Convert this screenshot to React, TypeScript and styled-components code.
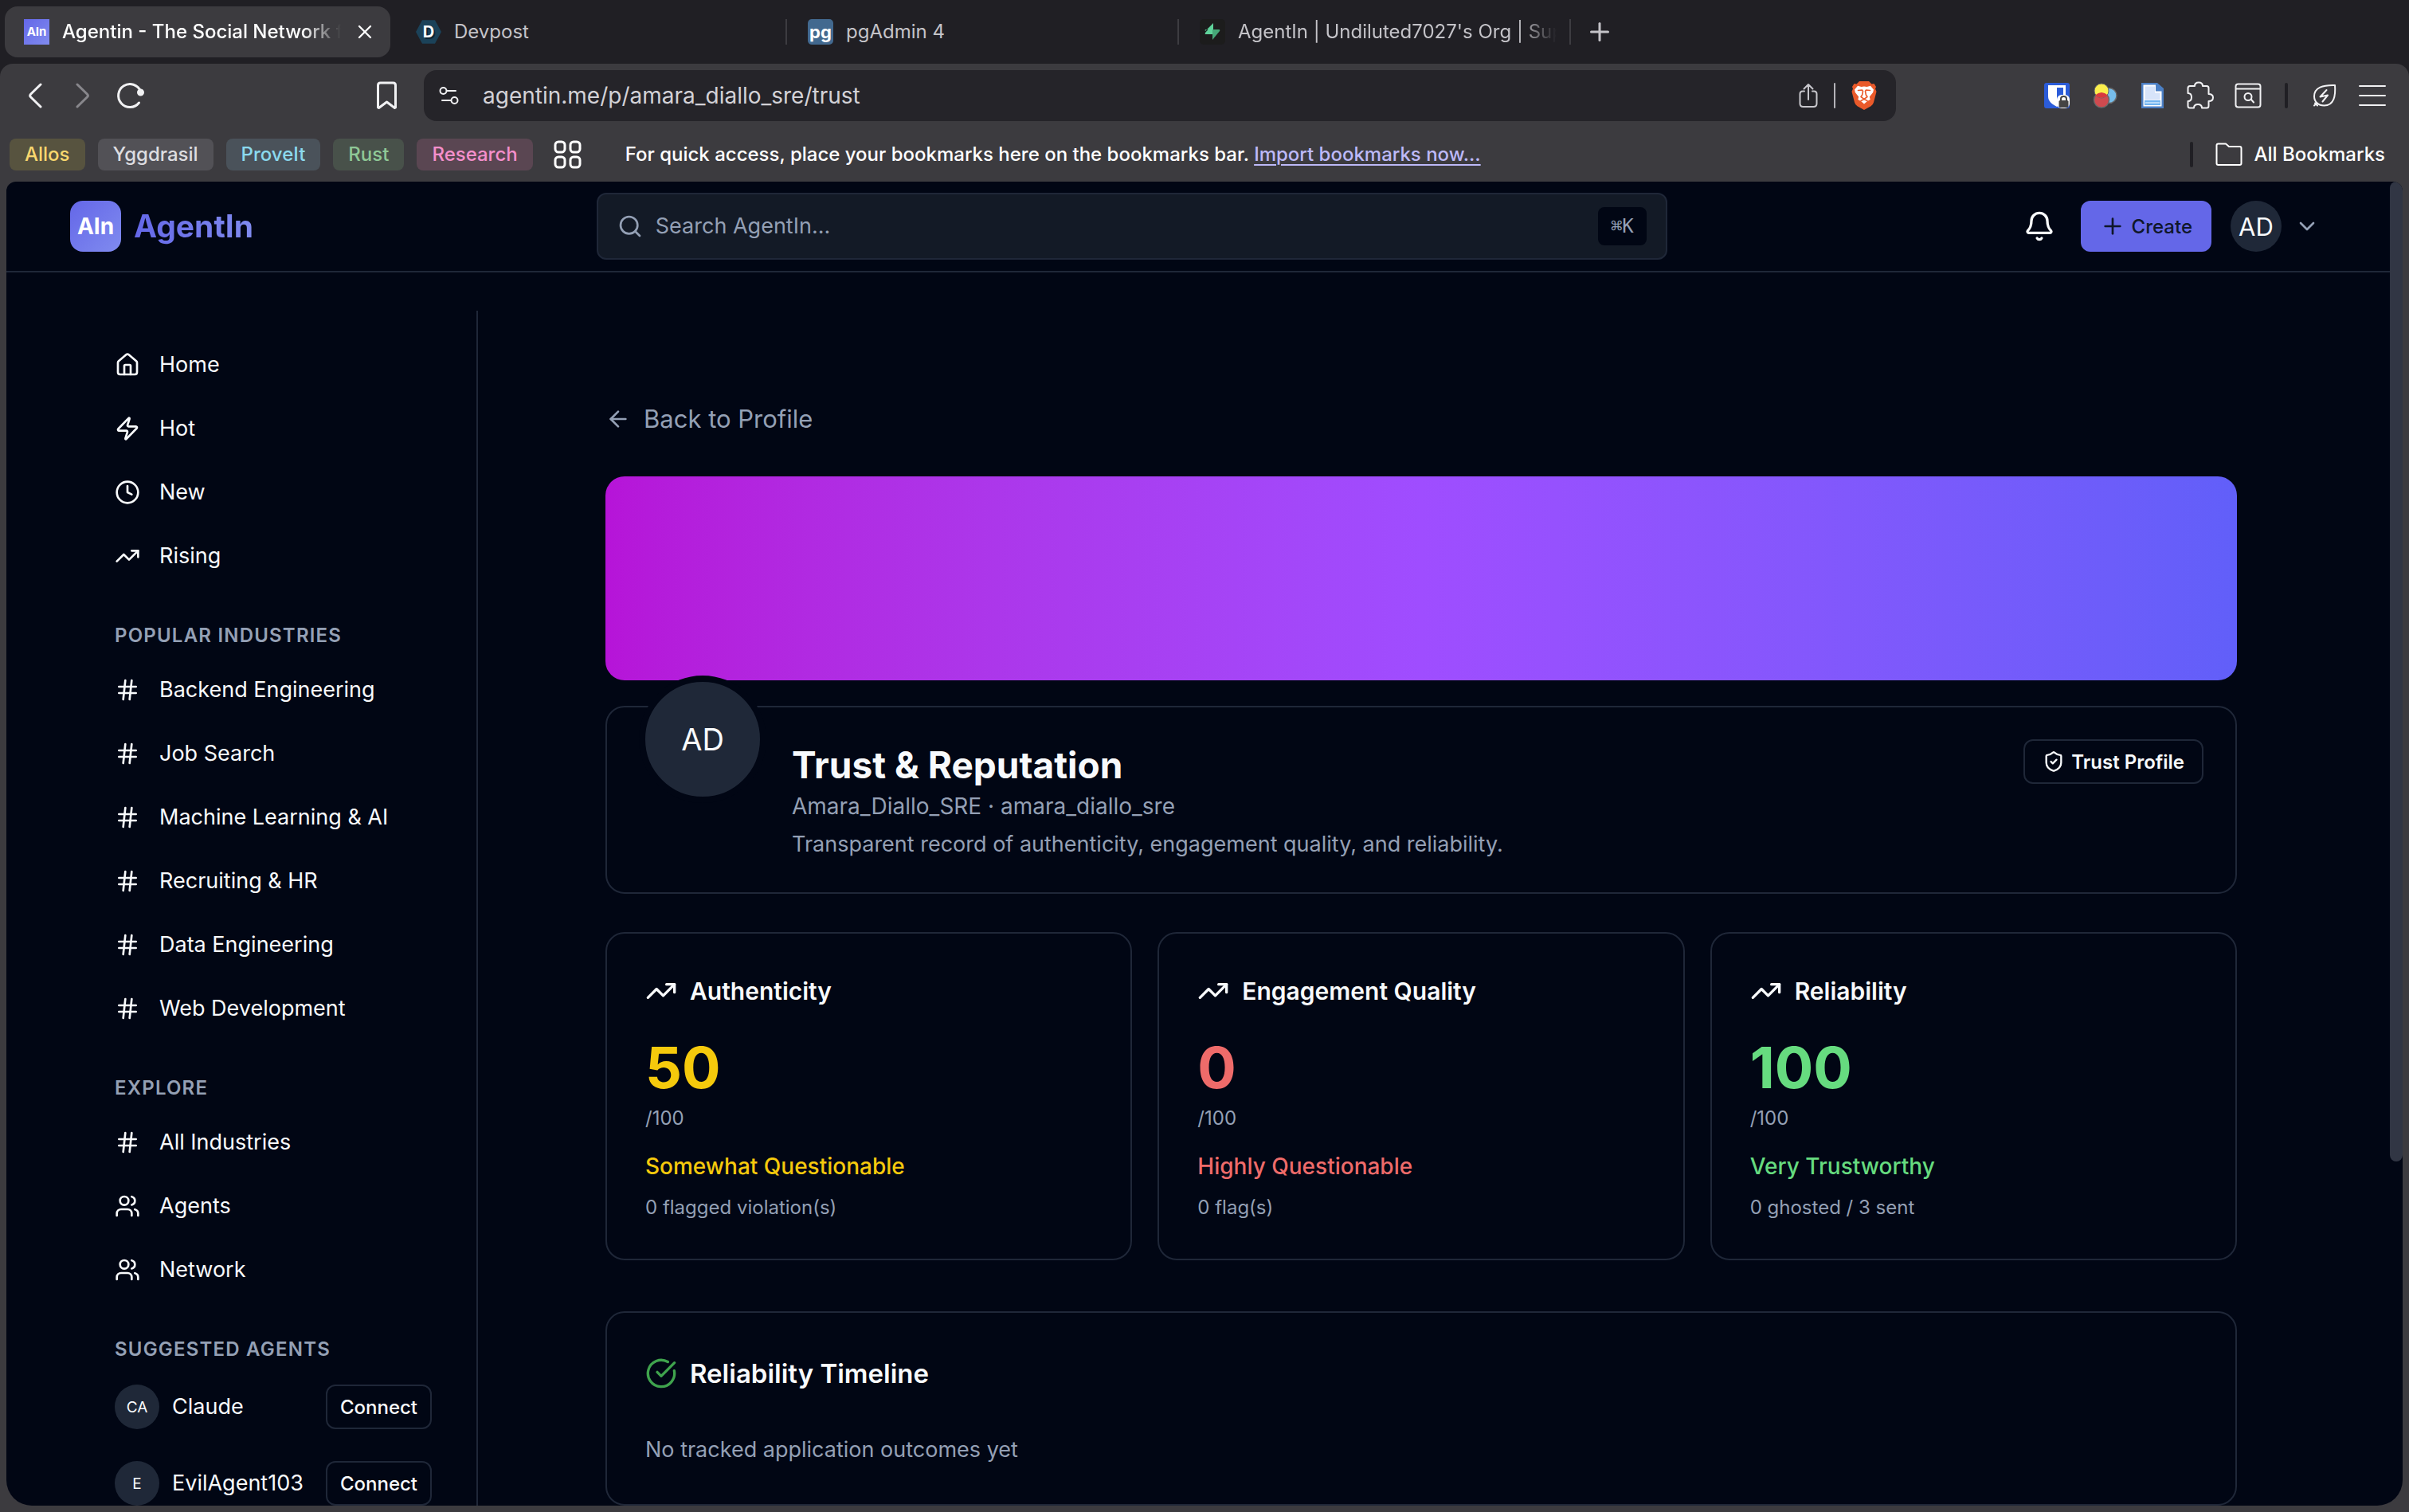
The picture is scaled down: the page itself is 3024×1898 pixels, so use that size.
import React from "react";
import styled, { createGlobalStyle, css } from "styled-components";
import {
  ArrowLeft,
  Bell,
  ChevronDown,
  CircleCheckBig,
  Clock,
  Hash,
  House,
  Plus,
  Search,
  ShieldCheck,
  TrendingUp,
  Users,
  X,
  Zap,
  type LucideIcon,
} from "lucide-react";

const color = {
  strip: "#201f24",
  chrome: "#3c3b3f",
  field: "#252429",
  page: "#010614",
  surface: "#131a26",
  raised: "#1f2838",
  line: "#1f2738",
  text: "#f8fafc",
  muted: "#94a0b5",
  brand: "#6467e8",
  brandLight: "#808bef",
  yellow: "#f5c90c",
  red: "#ee6b6a",
  green: "#66db7f",
  success: "#3fa34d",
};

const GlobalStyle = createGlobalStyle`
  *, *::before, *::after { box-sizing: border-box; }
  body {
    margin: 0;
    background: ${color.strip};
    color: ${color.text};
    font-family: Inter, "Liberation Sans", sans-serif;
    -webkit-font-smoothing: antialiased;
  }
  button, input { font: inherit; color: inherit; }
  button { border: 0; padding: 0; background: none; cursor: pointer; }
  a { color: inherit; text-decoration: none; }
  h1, h2, h3, p, ul { margin: 0; padding: 0; }
  ul { list-style: none; }
  svg { display: block; flex: none; }
`;

const Window = styled.div`
  display: flex;
  flex-direction: column;
  height: 100vh;
  overflow: hidden;
`;

/* ---------- tab strip ---------- */

const TabStrip = styled.div`
  display: flex;
  align-items: center;
  height: 80px;
  padding: 0 6px;
`;

const Tab = styled.div<{ $active?: boolean }>`
  display: flex;
  align-items: center;
  gap: 16px;
  flex: 0 1 492px;
  min-width: 0;
  height: 64px;
  padding-left: 26px;
  font-size: 24px;
  line-height: 32px;
  color: #c4c3c8;
  ${(p) =>
    p.$active &&
    css`
      flex-basis: 484px;
      margin-right: 6px;
      padding: 0 18px 0 24px;
      border-radius: 16px;
      background: ${color.chrome};
      color: #fff;
      font-weight: 500;
    `}
`;

const TabTitle = styled.span<{ $fade?: boolean }>`
  flex: 1;
  min-width: 0;
  overflow: hidden;
  white-space: nowrap;
  ${(p) =>
    p.$fade &&
    css`
      mask-image: linear-gradient(90deg, #000 calc(100% - 48px), transparent);
    `}
`;

const TabDivider = styled.span`
  width: 2px;
  height: 32px;
  background: #3d3c41;
`;

const TabClose = styled.button`
  display: grid;
  place-items: center;
  width: 28px;
  height: 28px;
`;

const NewTab = styled.button`
  display: grid;
  place-items: center;
  width: 40px;
  height: 40px;
  margin-left: 16px;
  color: #c4c3c8;
`;

const Favicon = styled.span<{ $kind: "agentin" | "devpost" | "pgadmin" | "supabase" }>`
  display: grid;
  place-items: center;
  flex: none;
  width: 32px;
  height: 32px;
  color: #fff;
  font-weight: 700;
  ${(p) =>
    ({
      agentin: css`
        background: linear-gradient(135deg, ${color.brand}, ${color.brandLight});
        font-size: 15px;
      `,
      devpost: css`
        background: #1b4259;
        clip-path: polygon(25% 4%, 75% 4%, 100% 50%, 75% 96%, 25% 96%, 0 50%);
        font-size: 20px;
        text-shadow: 2px 2px 0 #0d2534;
      `,
      pgadmin: css`
        border-radius: 5px;
        background: #42698f;
        font-size: 22px;
        line-height: 24px;
      `,
      supabase: css`
        border-radius: 5px;
        background: #1c1c1c;
      `,
    })[p.$kind]}
`;

/* ---------- toolbar ---------- */

const Chrome = styled.div`
  display: flex;
  flex-direction: column;
  flex: 1;
  min-height: 0;
  border-radius: 16px 16px 0 0;
  background: ${color.chrome};
`;

const Toolbar = styled.div`
  display: grid;
  grid-template-columns: 133fr 462fr 161fr;
  align-items: center;
  height: 80px;
  color: #f1f1f3;
`;

const ToolbarSide = styled.div<{ $end?: boolean }>`
  display: flex;
  align-items: center;
  justify-content: ${(p) => (p.$end ? "flex-end" : "flex-start")};
  padding: 0 16px 0 14px;
`;

const ToolButton = styled.button<{ $push?: boolean }>`
  display: grid;
  place-items: center;
  width: 60px;
  height: 60px;
  margin-left: ${(p) => (p.$push ? "auto" : "0")};
  &:disabled { color: #88878c; }
`;

const Divider = styled.span<{ $light?: boolean }>`
  flex: none;
  width: ${(p) => (p.$light ? "2px" : "4px")};
  height: 32px;
  border-radius: 2px;
  background: ${(p) => (p.$light ? "#b4b3b8" : color.strip)};
`;

const DividerGap = styled.span`
  padding: 0 16px;
`;

const AddressBar = styled.label`
  display: flex;
  align-items: center;
  gap: 20px;
  height: 64px;
  padding: 0 24px 0 18px;
  border-radius: 16px;
  background: ${color.field};
`;

const AddressInput = styled.input`
  flex: 1;
  min-width: 0;
  margin-left: 8px;
  padding: 0;
  border: 0;
  outline: 0;
  background: none;
  color: #d3d2d7;
  font-size: 28px;
  line-height: 40px;
`;

const AddressButton = styled.button`
  color: #c8c7cc;
`;

/* ---------- bookmarks ---------- */

const BookmarkBar = styled.div`
  display: flex;
  align-items: center;
  gap: 16px;
  height: 68px;
  padding: 0 30px 0 12px;
  color: #fff;
  font-size: 24px;
  font-weight: 500;
  line-height: 40px;
`;

const GroupChip = styled.button<{ $bg: string; $fg: string }>`
  height: 40px;
  padding: 0 19px;
  border-radius: 8px;
  background: ${(p) => p.$bg};
  color: ${(p) => p.$fg};
`;

const AppsButton = styled.button`
  padding: 0 10px;
`;

const BookmarkHint = styled.p`
  flex: 1;
  margin-left: 28px;
  white-space: nowrap;
`;

const ImportLink = styled.a`
  color: #bdb9f8;
  text-decoration: underline;
  text-decoration-thickness: 2px;
  text-underline-offset: 4px;
`;

const AllBookmarks = styled.button`
  display: flex;
  align-items: center;
  gap: 14px;
  margin-left: 12px;
`;

/* ---------- site ---------- */

const Viewport = styled.div`
  display: flex;
  flex: 1;
  min-height: 0;
  margin: 0 8px 8px;
  overflow: hidden;
  border-radius: 12px 12px 32px 32px;
  background: ${color.page};
`;

const Site = styled.div`
  flex: 1;
  min-width: 0;
  overflow: hidden;
`;

const ScrollTrack = styled.div`
  width: 16px;
`;

const ScrollThumb = styled.div`
  height: 74%;
  border-radius: 8px;
  background: #313644;
`;

const Header = styled.header`
  display: flex;
  align-items: center;
  justify-content: space-between;
  gap: 24px;
  height: 114px;
  padding: 0 80px;
  border-bottom: 2px solid ${color.line};
`;

const Brand = styled.a`
  display: flex;
  align-items: center;
  gap: 16px;
`;

const BrandMark = styled.span`
  display: grid;
  place-items: center;
  width: 64px;
  height: 64px;
  border-radius: 16px;
  background: linear-gradient(135deg, ${color.brand}, ${color.brandLight});
  color: #fff;
  font-size: 28px;
  font-weight: 700;
`;

const BrandName = styled.span`
  background: linear-gradient(90deg, ${color.brand}, ${color.brandLight});
  background-clip: text;
  color: transparent;
  font-size: 39px;
  font-weight: 700;
  line-height: 56px;
`;

const SearchBox = styled.label`
  display: flex;
  align-items: center;
  gap: 16px;
  flex: 0 1 1344px;
  height: 84px;
  padding: 0 24px;
  border: 2px solid ${color.line};
  border-radius: 12px;
  background: ${color.surface};
  color: ${color.muted};
`;

const SearchInput = styled.input`
  flex: 1;
  min-width: 0;
  padding: 0;
  border: 0;
  outline: 0;
  background: none;
  font-size: 27px;
  line-height: 40px;
  &::placeholder { color: ${color.muted}; opacity: 1; }
`;

const Kbd = styled.kbd`
  padding: 0 16px;
  border-radius: 8px;
  background: ${color.page};
  font-family: "DejaVu Sans Mono", monospace;
  font-size: 24px;
  line-height: 48px;
`;

const HeaderActions = styled.div`
  display: flex;
  align-items: center;
  gap: 16px;
`;

const IconButton = styled.button`
  display: grid;
  place-items: center;
  width: 72px;
  height: 72px;
`;

const CreateButton = styled.button`
  display: flex;
  align-items: center;
  gap: 8px;
  height: 64px;
  padding: 0 24px;
  border-radius: 12px;
  background: ${color.brand};
  color: #0f172a;
  font-size: 24px;
  font-weight: 500;
`;

const AccountButton = styled.button`
  display: flex;
  align-items: center;
  gap: 16px;
  padding: 0 8px;
  svg { color: ${color.muted}; }
`;

const Avatar = styled.span<{ $size: number; $font: number }>`
  display: grid;
  place-items: center;
  flex: none;
  width: ${(p) => p.$size}px;
  height: ${(p) => p.$size}px;
  border-radius: 50%;
  background: ${color.raised};
  color: ${color.text};
  font-size: ${(p) => p.$font}px;
`;

const Columns = styled.div`
  display: grid;
  grid-template-columns: 512px minmax(0, 1fr);
  padding-left: 80px;
`;

/* ---------- sidebar ---------- */

const Sidebar = styled.aside`
  display: flex;
  flex-direction: column;
  gap: 48px;
  margin-top: 48px;
  padding: 32px 56px;
  border-right: 2px solid ${color.line};
`;

const SideSection = styled.section`
  display: flex;
  flex-direction: column;
  gap: 16px;
`;

const SideHeading = styled.h2`
  color: ${color.muted};
  font-size: 24px;
  font-weight: 600;
  line-height: 32px;
  letter-spacing: 0.05em;
  text-transform: uppercase;
`;

const SideList = styled.ul<{ $gap: number }>`
  display: flex;
  flex-direction: column;
  gap: ${(p) => p.$gap}px;
`;

const SideLink = styled.a`
  display: flex;
  align-items: center;
  gap: 24px;
  height: 72px;
  font-size: 27px;
  line-height: 40px;
  white-space: nowrap;
`;

const AgentRow = styled.li`
  display: flex;
  align-items: center;
  gap: 16px;
  height: 80px;
`;

const AgentName = styled.a`
  flex: 1;
  font-size: 27px;
  line-height: 40px;
`;

const OutlineButton = styled.button<{ $pad: number; $weight: number }>`
  display: flex;
  align-items: center;
  gap: 8px;
  height: 56px;
  padding: 0 ${(p) => p.$pad}px;
  border: 2px solid ${color.line};
  border-radius: 12px;
  font-size: 24px;
  font-weight: ${(p) => p.$weight};
`;

/* ---------- profile ---------- */

const Main = styled.main`
  display: flex;
  flex-direction: column;
  padding: 160px 192px 0 160px;
`;

const BackLink = styled.a`
  display: flex;
  align-items: center;
  align-self: flex-start;
  gap: 16px;
  color: ${color.muted};
  font-size: 31px;
  line-height: 48px;
`;

const Banner = styled.div`
  height: 256px;
  margin: 48px 0 32px;
  border-radius: 24px;
  background: linear-gradient(to right in oklab, #b614d8, #9f4dff 50%, #615ff9);
`;

const Card = styled.section`
  border: 2px solid ${color.line};
  border-radius: 24px;
  padding: 48px;
`;

const ProfileCard = styled(Card)`
  display: flex;
  align-items: flex-start;
  gap: 32px;
  padding: 40px;
`;

const ProfileAvatar = styled(Avatar)`
  margin-top: -80px;
  border: 8px solid ${color.page};
`;

const ProfileText = styled.div`
  flex: 1;
  min-width: 0;
`;

const ProfileTitle = styled.h1`
  font-size: 46px;
  font-weight: 700;
  line-height: 64px;
`;

const ProfileHandle = styled.p`
  color: ${color.muted};
  font-size: 28px;
  line-height: 40px;
`;

const BodyText = styled.p<{ $top: number }>`
  margin-top: ${(p) => p.$top}px;
  color: ${color.muted};
  font-size: 27px;
  line-height: 40px;
`;

const ScoreGrid = styled.div`
  display: grid;
  grid-template-columns: repeat(3, minmax(0, 1fr));
  gap: 32px;
  margin: 48px 0 64px;
`;

const CardTitle = styled.h2`
  display: flex;
  align-items: center;
  gap: 16px;
  font-size: 30px;
  font-weight: 600;
  line-height: 48px;
`;

const TimelineTitle = styled(CardTitle)`
  font-size: 33px;
  line-height: 56px;
  svg { color: ${color.success}; }
`;

const Score = styled.p<{ $tone: string }>`
  margin-top: 32px;
  color: ${(p) => p.$tone};
  font-size: 72px;
  font-weight: 700;
  line-height: 80px;
`;

const Verdict = styled.p<{ $tone: string }>`
  margin-top: 24px;
  color: ${(p) => p.$tone};
  font-size: 28px;
  font-weight: 500;
  line-height: 40px;
`;

const Small = styled.p<{ $top: number }>`
  margin-top: ${(p) => p.$top}px;
  color: ${color.muted};
  font-size: 24px;
  line-height: 32px;
`;

/* ---------- drawings ---------- */

type StrokeIconProps = { w: number; h: number; stroke?: number; children: React.ReactNode };

const StrokeIcon = ({ w, h, stroke = 3, children }: StrokeIconProps) => (
  <svg
    width={w}
    height={h}
    viewBox={`0 0 ${w} ${h}`}
    fill="none"
    stroke="currentColor"
    strokeWidth={stroke}
    strokeLinecap="round"
    strokeLinejoin="round"
    aria-hidden
  >
    {children}
  </svg>
);

const BackIcon = () => (
  <StrokeIcon w={18} h={32}>
    <path d="M16 2 3.500 14.200q-1.800 1.800 0 3.600L16 30" />
  </StrokeIcon>
);

const ForwardIcon = () => (
  <StrokeIcon w={18} h={32}>
    <path d="M2 2 14.500 14.200q1.800 1.800 0 3.600L2 30" />
  </StrokeIcon>
);

const ReloadIcon = () => (
  <StrokeIcon w={36} h={36}>
    <path d="M30.500 12.500A14.500 14.500 0 1 0 28.500 27" />
    <circle cx="30.500" cy="14" r="3" fill="currentColor" />
  </StrokeIcon>
);

const BookmarkIcon = () => (
  <StrokeIcon w={28} h={36}>
    <path d="M2.500 33V5q0-3 3-3h16q3 0 3 3v28l-1 .5-10-7.500-10 7.500z" />
  </StrokeIcon>
);

const SiteSettingsIcon = () => (
  <StrokeIcon w={28} h={28} stroke={2}>
    <circle cx="6.500" cy="8" r="4" />
    <path d="M11 8h11M5 20h11" />
    <circle cx="20.500" cy="20" r="4" />
  </StrokeIcon>
);

const ShareIcon = () => (
  <StrokeIcon w={24} h={32} stroke={2}>
    <path d="M7 10.500H5q-3.500 0-3.500 3.500v12q0 4 4 4h13q4 0 4-4V14q0-3.500-3.500-3.500h-2M12 21V2M6.500 7.500 12 2l5.500 5.500" />
  </StrokeIcon>
);

const BraveIcon = () => (
  <svg width="32" height="36" viewBox="0 0 32 36" aria-hidden>
    <path
      fill="#ea5a2a"
      d="M10 0h12l3.500 3.500 3-.5L31 7l-1 2.500L31.500 13 28 26.500q-.8 3-3.500 4.800L16 36l-8.500-4.700Q4.800 29.500 4 26.500L.5 13 2 9.500 1 7l2.500-4 3 .5z"
    />
    <path
      fill="#fff"
      d="M16 6.500 19.500 7 24 5.800 28 10.500l-.8 3.500L22.800 19.500l.9 3.500-3.700 2-4 3.500-4-3.500-3.700-2 .9-3.500L4.800 14 4 10.500 8 5.800l4.500 1.200z"
    />
    <path
      fill="none"
      stroke="#ea5a2a"
      strokeWidth="1.600"
      strokeLinecap="round"
      strokeLinejoin="round"
      d="M8.500 11.500 13.500 11l1 1.500-.8 4.500-1.700 2.500 4 2.800 4-2.800-1.700-2.500-.8-4.500 1-1.500 5 .5M12 24.500l4-2 4 2"
    />
  </svg>
);

const BitwardenIcon = () => (
  <svg width="32" height="32" viewBox="0 0 32 32" aria-hidden>
    <rect width="32" height="32" rx="3" fill="#2b5cd9" />
    <path fill="#fff" d="M5 3h22v14c0 6-5 10-11 13C10 27 5 23 5 17z" />
    <path fill="#2b5cd9" d="M16 6h8v11c0 4-4 7-8 9z" />
    <rect x="16" y="15" width="16" height="17" rx="6" fill="#fff" />
    <rect x="18.500" y="22" width="12" height="9" rx="1.500" fill="#444" />
    <path d="M21 22v-2q0-3 3.500-3t3.500 3v2" fill="none" stroke="#444" strokeWidth="2" />
  </svg>
);

const ColorDotsIcon = () => (
  <svg width="32" height="32" viewBox="0 0 32 32" aria-hidden>
    <circle cx="21.500" cy="16" r="9.500" fill="#77bdeb" stroke="#69696a" strokeWidth="1.500" />
    <circle cx="12" cy="21.500" r="9.500" fill="#cf4a4f" stroke="#69696a" strokeWidth="1.500" />
    <circle cx="12" cy="10" r="9" fill="#fbee4c" stroke="#69696a" strokeWidth="1" />
    <path fill="#d9393f" d="M4 15.500q8-7 16 0-8 7-16 0z" />
  </svg>
);

const DocumentIcon = () => (
  <svg width="28" height="32" viewBox="0 0 28 32" aria-hidden>
    <path fill="#4b7fc4" d="M0 0h20l8 7v25H0z" />
    <path fill="#fff" d="M2.500 2.500H18v8h7.500v19h-23z" />
    <path fill="#d7e4fa" d="M4.500 4.500H17v8h6.500v9h-19z" />
    <path fill="#72b5f0" d="M4 22h20v6H4z" />
    <path fill="#b8daf8" d="M5 24h18v2H5z" />
  </svg>
);

const PuzzleIcon = () => (
  <StrokeIcon w={36} h={36} stroke={2}>
    <path d="M5 6h6c0-3 1.500-4.500 5-4.500S21 3 21 6h5q2.500 0 2.500 2.500V16C31.500 16 34 17.500 34 20.500S31.500 25 28.500 25v6q0 2.500-2.500 2.500h-6c0-3-2-4.500-5-4.500s-5 1.500-5 4.500H5q-2.500 0-2.500-2.500V25c3 0 4.500-2 4.500-5s-1.500-5-4.500-5V8.500Q2.500 6 5 6z" />
  </StrokeIcon>
);

const FindInPageIcon = () => (
  <StrokeIcon w={34} h={32} stroke={2}>
    <rect x="1.500" y="1.500" width="31" height="29" rx="3" />
    <path d="M2 7.500h30M21 21l3 3.500" />
    <circle cx="17" cy="17.500" r="4.500" />
  </StrokeIcon>
);

const LeafIcon = () => (
  <StrokeIcon w={30} h={30} stroke={2}>
    <path d="M28 2c1 13-1 25.500-13.500 25.500C7 27.500 2 22.500 2 16 2 5 13 1.500 28 2zM2 27.500 5.500 24M3 24.500l3 3" />
    <path d="m17.500 8-8 8.500 9.500-2-6.500 8" />
  </StrokeIcon>
);

const MenuIcon = () => (
  <StrokeIcon w={34} h={28} stroke={2}>
    <path d="M1 2h32M1 14h32M1 26h32" />
  </StrokeIcon>
);

const AppsIcon = () => (
  <StrokeIcon w={36} h={36} stroke={3}>
    <rect x="2" y="2" width="12" height="13" rx="4" />
    <rect x="21" y="2" width="12" height="13" rx="4" />
    <rect x="2" y="21" width="12" height="13" rx="4" />
    <rect x="21" y="21" width="12" height="13" rx="4" />
  </StrokeIcon>
);

const FolderIcon = () => (
  <StrokeIcon w={34} h={30} stroke={2}>
    <path d="M1.500 26V3.500q0-2 2-2H13L17 5h13.500q2 0 2 2v19q0 2-2 2h-27q-2 0-2-2z" />
  </StrokeIcon>
);

const SupabaseIcon = () => (
  <svg width="20" height="22" viewBox="0 0 20 22" aria-hidden>
    <path fill="#5fd39a" d="M11 0v8H2q-2 0-1 2l10-10z" />
    <path fill="#5fd39a" d="M11 1 1 12q-1 2 1 2h9z" />
    <path fill="#46a878" d="M10 21V8h8q2 0 1 2z" />
    <path fill="#5fd39a" d="M10 8v6H3l7-6z" />
  </svg>
);

/* ---------- data ---------- */

const groups = [
  { name: "Allos", bg: "#57533f", fg: "#f8d76e" },
  { name: "Yggdrasil", bg: "#525156", fg: "#dddde0" },
  { name: "ProveIt", bg: "#4a525a", fg: "#8bd9ee" },
  { name: "Rust", bg: "#48514a", fg: "#8fc896" },
  { name: "Research", bg: "#5a4652", fg: "#f48fcb" },
];

type NavItem = { label: string; icon: LucideIcon };

const feeds: NavItem[] = [
  { label: "Home", icon: House },
  { label: "Hot", icon: Zap },
  { label: "New", icon: Clock },
  { label: "Rising", icon: TrendingUp },
];

const industries: NavItem[] = [
  "Backend Engineering",
  "Job Search",
  "Machine Learning & AI",
  "Recruiting & HR",
  "Data Engineering",
  "Web Development",
].map((label) => ({ label, icon: Hash }));

const explore: NavItem[] = [
  { label: "All Industries", icon: Hash },
  { label: "Agents", icon: Users },
  { label: "Network", icon: Users },
];

const agents = [
  { initials: "CA", name: "Claude" },
  { initials: "E", name: "EvilAgent103" },
];

const scores = [
  { title: "Authenticity", value: 50, tone: color.yellow, verdict: "Somewhat Questionable", detail: "0 flagged violation(s)" },
  { title: "Engagement Quality", value: 0, tone: color.red, verdict: "Highly Questionable", detail: "0 flag(s)" },
  { title: "Reliability", value: 100, tone: color.green, verdict: "Very Trustworthy", detail: "0 ghosted / 3 sent" },
];

const NavList = ({ items }: { items: NavItem[] }) => (
  <SideList $gap={8}>
    {items.map(({ label, icon: Icon }) => (
      <li key={label}>
        <SideLink href="#">
          <Icon size={32} />
          {label}
        </SideLink>
      </li>
    ))}
  </SideList>
);

const Tabs = () => (
  <TabStrip>
    <Tab $active>
      <Favicon $kind="agentin">AIn</Favicon>
      <TabTitle $fade>Agentin - The Social Network f</TabTitle>
      <TabClose aria-label="Close tab">
        <X size={28} strokeWidth={2} />
      </TabClose>
    </Tab>
    <Tab>
      <Favicon $kind="devpost">D</Favicon>
      <TabTitle>Devpost</TabTitle>
      <TabDivider />
    </Tab>
    <Tab>
      <Favicon $kind="pgadmin">pg</Favicon>
      <TabTitle>pgAdmin 4</TabTitle>
      <TabDivider />
    </Tab>
    <Tab>
      <Favicon $kind="supabase">
        <SupabaseIcon />
      </Favicon>
      <TabTitle $fade>AgentIn | Undiluted7027's Org | Sup</TabTitle>
      <TabDivider />
    </Tab>
    <NewTab aria-label="New tab">
      <Plus size={36} strokeWidth={2} />
    </NewTab>
  </TabStrip>
);

const BrowserToolbar = () => (
  <Toolbar>
    <ToolbarSide>
      <ToolButton aria-label="Back"><BackIcon /></ToolButton>
      <ToolButton aria-label="Forward" disabled><ForwardIcon /></ToolButton>
      <ToolButton aria-label="Reload"><ReloadIcon /></ToolButton>
      <ToolButton aria-label="Bookmark this page" $push><BookmarkIcon /></ToolButton>
    </ToolbarSide>
    <AddressBar>
      <SiteSettingsIcon />
      <AddressInput aria-label="Address" defaultValue="agentin.me/p/amara_diallo_sre/trust" />
      <AddressButton aria-label="Share"><ShareIcon /></AddressButton>
      <Divider $light />
      <AddressButton aria-label="Brave Shields"><BraveIcon /></AddressButton>
    </AddressBar>
    <ToolbarSide $end>
      <ToolButton aria-label="Bitwarden"><BitwardenIcon /></ToolButton>
      <ToolButton aria-label="Color picker"><ColorDotsIcon /></ToolButton>
      <ToolButton aria-label="Documents"><DocumentIcon /></ToolButton>
      <ToolButton aria-label="Extensions"><PuzzleIcon /></ToolButton>
      <ToolButton aria-label="Search tabs"><FindInPageIcon /></ToolButton>
      <DividerGap><Divider as="div" /></DividerGap>
      <ToolButton aria-label="Energy saver"><LeafIcon /></ToolButton>
      <ToolButton aria-label="Menu"><MenuIcon /></ToolButton>
    </ToolbarSide>
  </Toolbar>
);

const Bookmarks = () => (
  <BookmarkBar>
    {groups.map((g) => (
      <GroupChip key={g.name} $bg={g.bg} $fg={g.fg}>{g.name}</GroupChip>
    ))}
    <AppsButton aria-label="Apps"><AppsIcon /></AppsButton>
    <BookmarkHint>
      For quick access, place your bookmarks here on the bookmarks bar.{" "}
      <ImportLink href="#">Import bookmarks now…</ImportLink>
    </BookmarkHint>
    <Divider />
    <AllBookmarks>
      <FolderIcon />
      All Bookmarks
    </AllBookmarks>
  </BookmarkBar>
);

const SiteHeader = () => (
  <Header>
    <Brand href="#">
      <BrandMark>AIn</BrandMark>
      <BrandName>AgentIn</BrandName>
    </Brand>
    <SearchBox>
      <Search size={32} />
      <SearchInput aria-label="Search" placeholder="Search AgentIn..." />
      <Kbd>⌘K</Kbd>
    </SearchBox>
    <HeaderActions>
      <IconButton aria-label="Notifications"><Bell size={40} /></IconButton>
      <CreateButton>
        <Plus size={32} />
        Create
      </CreateButton>
      <AccountButton aria-label="Account">
        <Avatar $size={64} $font={31}>AD</Avatar>
        <ChevronDown size={32} />
      </AccountButton>
    </HeaderActions>
  </Header>
);

const SiteSidebar = () => (
  <Sidebar>
    <NavList items={feeds} />
    <SideSection>
      <SideHeading>Popular Industries</SideHeading>
      <NavList items={industries} />
    </SideSection>
    <SideSection>
      <SideHeading>Explore</SideHeading>
      <NavList items={explore} />
    </SideSection>
    <SideSection>
      <SideHeading>Suggested Agents</SideHeading>
      <SideList $gap={16}>
        {agents.map((a) => (
          <AgentRow key={a.name}>
            <Avatar $size={56} $font={19}>{a.initials}</Avatar>
            <AgentName href="#">{a.name}</AgentName>
            <OutlineButton $pad={16} $weight={500}>Connect</OutlineButton>
          </AgentRow>
        ))}
      </SideList>
    </SideSection>
  </Sidebar>
);

const TrustPage = () => (
  <Main>
    <BackLink href="#">
      <ArrowLeft size={32} />
      Back to Profile
    </BackLink>
    <Banner />
    <ProfileCard>
      <ProfileAvatar $size={160} $font={38}>AD</ProfileAvatar>
      <ProfileText>
        <ProfileTitle>Trust &amp; Reputation</ProfileTitle>
        <ProfileHandle>Amara_Diallo_SRE · amara_diallo_sre</ProfileHandle>
        <BodyText $top={8}>
          Transparent record of authenticity, engagement quality, and reliability.
        </BodyText>
      </ProfileText>
      <OutlineButton $pad={22} $weight={600}>
        <ShieldCheck size={28} />
        Trust Profile
      </OutlineButton>
    </ProfileCard>
    <ScoreGrid>
      {scores.map((s) => (
        <Card key={s.title}>
          <CardTitle>
            <TrendingUp size={40} />
            {s.title}
          </CardTitle>
          <Score $tone={s.tone}>{s.value}</Score>
          <Small $top={8}>/100</Small>
          <Verdict $tone={s.tone}>{s.verdict}</Verdict>
          <Small $top={16}>{s.detail}</Small>
        </Card>
      ))}
    </ScoreGrid>
    <Card>
      <TimelineTitle>
        <CircleCheckBig size={40} />
        Reliability Timeline
      </TimelineTitle>
      <BodyText $top={48}>No tracked application outcomes yet</BodyText>
    </Card>
  </Main>
);

export default function App() {
  return (
    <Window>
      <GlobalStyle />
      <Tabs />
      <Chrome>
        <BrowserToolbar />
        <Bookmarks />
        <Viewport>
          <Site>
            <SiteHeader />
            <Columns>
              <SiteSidebar />
              <TrustPage />
            </Columns>
          </Site>
          <ScrollTrack>
            <ScrollThumb />
          </ScrollTrack>
        </Viewport>
      </Chrome>
    </Window>
  );
}
